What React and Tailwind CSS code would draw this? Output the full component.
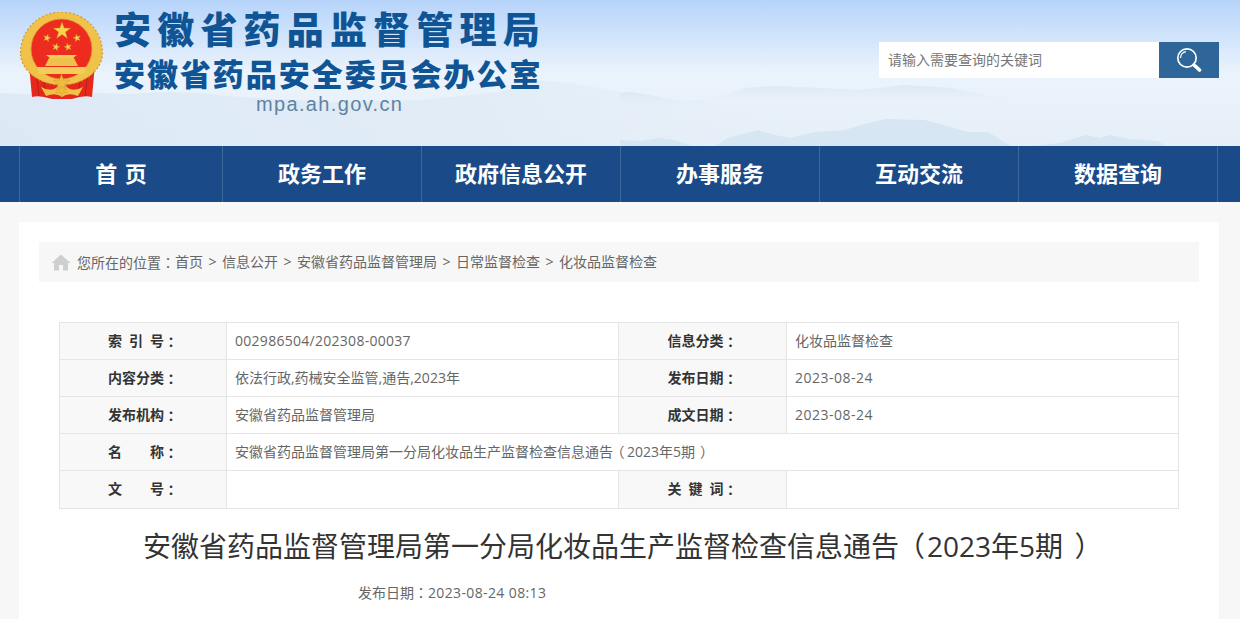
const navItems = ["首 页", "政务工作", "政府信息公开", "办事服务", "互动交流", "数据查询"];
const crumbs = ["首页", "信息公开", "安徽省药品监督管理局", "日常监督检查", "化妆品监督检查"];

// fullwidth punctuation sits centred in the reference, the TC cut does that
const P = ({ children }) => <span className="font-['Noto_Sans_CJK_TC',sans-serif]">{children}</span>;
const Open = () => <span className="inline-block w-[1em] pl-[0.28em] [font-feature-settings:'palt']">（</span>;
const Close = () => <span className="inline-block w-[1em] pl-[0.4em] [font-feature-settings:'palt']">）</span>;

const Star = ({ x, y, r, rot = 0, fill = "#f7d44c" }) => {
  const pts = [];
  for (let i = 0; i < 10; i++) {
    const rad = i % 2 ? r * 0.4 : r;
    const a = ((-90 + rot + i * 36) * Math.PI) / 180;
    pts.push(`${(x + rad * Math.cos(a)).toFixed(2)},${(y + rad * Math.sin(a)).toFixed(2)}`);
  }
  return <polygon points={pts.join(" ")} fill={fill} stroke="#c9962a" strokeWidth="0.4" />;
};

const Emblem = () => (
  <svg width="84" height="88" viewBox="0 0 84 88" className="mt-[1px] shrink-0">
    <path d="M9 52 L12 85 Q20 83 32 87 H52 Q64 83 72 85 L75 52 Z" fill="#e5281b" />
    <path d="M17 66 L19 84 M24 70 L26 85 M67 66 L65 84 M60 70 L58 85" stroke="#b81f14" strokeWidth="1" />
    <path d="M0.5 41 A41 41 0 0 1 82.5 41 C82.5 58 64 73 41.5 73 C19 73 0.5 58 0.5 41 Z" fill="#f0c24a" />
    <path d="M0.5 41 A41 41 0 0 1 82.5 41 C82.5 58 64 73 41.5 73 C19 73 0.5 58 0.5 41 Z" fill="none" stroke="#d39b2c" strokeWidth="1.2" strokeDasharray="2 2" />
    <ellipse cx="41.5" cy="37" rx="30.5" ry="30" fill="#ee2b1f" stroke="#d69a2b" strokeWidth="0.8" />
    <Star x={42} y={19} r={9} />
    <Star x={27} y={26} r={4} rot={15} />
    <Star x={57} y={26} r={4} rot={-15} />
    <Star x={36} y={35} r={4} rot={15} />
    <Star x={48} y={35} r={4} rot={-15} />
    <path d="M26 43 H57 L53 46 H30 Z" fill="#f4cd58" />
    <path d="M29 46 H54 L58 54 H25 Z" fill="#efc04a" />
    <path d="M17 55 H66 L64 62 H19 Z" fill="#f4cd58" />
    <path d="M21 75 Q30 80 36 76 L42 70 L48 76 Q54 80 63 75 L58 84 Q48 80 42 85 Q36 80 26 84 Z" fill="#f0c24a" />
    <Star x={41.5} y={71} r={9} fill="#efbb3f" />
    <Star x={41.5} y={79} r={6} rot={36} fill="#efbb3f" />
  </svg>
);

const Mountains = () => (
  <svg className="absolute inset-0" width="1240" height="146" viewBox="0 0 1240 146">
    <defs>
      <linearGradient id="haze" x1="0" y1="0" x2="1" y2="0">
        <stop offset="0" stopColor="#dbe8f5" />
        <stop offset="0.6" stopColor="#e0ebf6" />
        <stop offset="1" stopColor="#e6eff8" stopOpacity="0" />
      </linearGradient>
      <linearGradient id="far" x1="0" y1="0" x2="0" y2="1">
        <stop offset="0" stopColor="#dce8f4" />
        <stop offset="1" stopColor="#e9f1fa" stopOpacity="0" />
      </linearGradient>
    </defs>
    <path d="M0 93 L40 95 L95 93 L130 94 L166 92 L198 93 L240 97 L330 102 L420 100 L500 92 L537 80 L570 83 L620 92 L690 104 L800 120 V146 H0 Z" fill="url(#haze)" opacity="0.85" />
    <path d="M620 93 L632 92 L655 96 L680 101 L700 100 L715 104 L760 112 L620 112 Z" fill="url(#far)" />
    <path d="M700 104 L746 88 L775 86 L820 88 L860 90 L880 88 L905 85 L950 88 L975 93 L1030 106 Z" fill="url(#far)" />
    <path d="M620 140 L640 141 L660 138 L675 140 L692 146 H620 Z" fill="#d7e6f3" />
    <path d="M715 146 L728 138 L758 130 L775 135 L790 138 L815 132 L845 130 L865 124 L885 119 L925 120 L968 132 L988 132 L1011 146 Z" fill="#d7e6f3" />
    <path d="M1031 146 L1060 143 L1086 135 L1100 138 L1110 135 L1130 139 L1158 141 L1165 146 Z" fill="#d7e6f3" />
  </svg>
);

const Label = ({ chars }) => (
  <div className="flex justify-center font-bold text-[#333]">
    <span className="flex w-14 justify-between">
      {chars.map((c) => (
        <span key={c}>{c}</span>
      ))}
    </span>
    <P>：</P>
  </div>
);

const Row = ({ children, last }) => (
  <div className={`flex h-[37px] ${last ? "" : "border-b border-[#e5e5e5]"}`}>{children}</div>
);

const LabelCell = ({ chars, width }) => (
  <div className={`flex items-center justify-center bg-[#f8f8f8] border-r border-[#e5e5e5] pb-[1px] ${width}`}>
    <Label chars={chars} />
  </div>
);

const ValueCell = ({ children, width }) => (
  <div className={`flex items-center px-2 pb-[1px] text-[#666] ${width}`}>{children}</div>
);

export default function App() {
  return (
    <div className="h-[619px] w-[1240px] overflow-hidden bg-[#f7f7f7] font-['Open_Sans','Noto_Sans_CJK_SC',sans-serif] text-sm">
      <header className="relative h-[146px] bg-gradient-to-b from-[#b6d4fa] via-[#ebf3fc] via-50% to-[#e6eff8]">
        <Mountains />
        <div className="relative flex pl-[20px] pt-[11px]">
          <Emblem />
          <div className="ml-[10px] flex w-[428px] flex-col items-start">
            <div className="text-[37px] leading-[38px] font-black tracking-[6.2px] text-[#0f5596] whitespace-nowrap">
              安徽省药品监督管理局
            </div>
            <div className="mt-[7px] text-[31px] leading-[36px] font-black tracking-[1.95px] text-[#0f5596] whitespace-nowrap">
              安徽省药品安全委员会办公室
            </div>
            <div className="ml-[142px] mt-[1px] text-[20px] leading-[22px] tracking-[1.35px] text-[#5f83a3] font-['Liberation_Sans',sans-serif]">
              mpa.ah.gov.cn
            </div>
          </div>
          <div className="ml-[337px] mt-[31px] flex h-9">
            <div className="flex w-[280px] items-center bg-white pl-[9px] text-[#777]">请输入需要查询的关键词</div>
            <button className="flex w-[60px] items-center justify-center bg-[#2f6699]">
              <svg width="26" height="26" viewBox="0 0 26 26" fill="none">
                <circle cx="11" cy="11" r="9.2" stroke="white" strokeWidth="1.7" />
                <path d="M4.5 11 A6.5 6.5 0 0 1 10 4.6" stroke="white" strokeWidth="1.3" />
                <path d="M18 18 L23.5 23" stroke="white" strokeWidth="3.6" strokeLinecap="round" />
              </svg>
            </button>
          </div>
        </div>
      </header>

      <nav className="h-14 bg-[#1a4b88]">
        <div className="ml-[19px] flex h-14 w-[1199px] border-l border-[#3f6a9e]">
          {navItems.map((item, i) => (
            <div
              key={item}
              className={`flex items-center justify-center border-r border-[#3f6a9e] pb-[1px] text-[22px] font-bold text-white [word-spacing:2px] ${i === 0 ? "w-[203px]" : "w-[199px]"}`}
            >
              {item}
            </div>
          ))}
        </div>
      </nav>

      <main className="ml-[19px] mt-5 h-[400px] w-[1200px] bg-white px-5 pt-5">
        <div className="flex h-10 items-center bg-[#f7f7f7] pl-3 text-[#666]">
          <svg width="20" height="17" viewBox="0 0 20 17" className="mr-[6px]">
            <path d="M10 0.5 L0.5 9 H3 V16.5 H8 V11 H12 V16.5 H17 V9 H19.5 Z" fill="#cfcfcf" />
          </svg>
          <span>
            您所在的位置<P>：</P>
          </span>
          {crumbs.map((c, i) => (
            <span key={c} className="flex">
              {i > 0 && <span className="px-[5.5px]">&gt;</span>}
              {c}
            </span>
          ))}
        </div>

        <div className="mx-5 mt-10 border border-[#e5e5e5]">
          <Row>
            <LabelCell chars={["索", "引", "号"]} width="w-[167px]" />
            <ValueCell width="w-[391px]">
              <span className="tracking-[0.28px]">002986504/202308-00037</span>
            </ValueCell>
            <LabelCell chars={["信", "息", "分", "类"]} width="w-[169px] border-l" />
            <ValueCell>化妆品监督检查</ValueCell>
          </Row>
          <Row>
            <LabelCell chars={["内", "容", "分", "类"]} width="w-[167px]" />
            <ValueCell width="w-[391px]">依法行政,药械安全监管,通告,2023年</ValueCell>
            <LabelCell chars={["发", "布", "日", "期"]} width="w-[169px] border-l" />
            <ValueCell>
              <span className="tracking-[0.5px]">2023-08-24</span>
            </ValueCell>
          </Row>
          <Row>
            <LabelCell chars={["发", "布", "机", "构"]} width="w-[167px]" />
            <ValueCell width="w-[391px]">安徽省药品监督管理局</ValueCell>
            <LabelCell chars={["成", "文", "日", "期"]} width="w-[169px] border-l" />
            <ValueCell>
              <span className="tracking-[0.5px]">2023-08-24</span>
            </ValueCell>
          </Row>
          <Row>
            <LabelCell chars={["名", "称"]} width="w-[167px]" />
            <ValueCell>
              <span>
                安徽省药品监督管理局第一分局化妆品生产监督检查信息通告
                <Open />
                2023年5期
                <Close />
              </span>
            </ValueCell>
          </Row>
          <Row last>
            <LabelCell chars={["文", "号"]} width="w-[167px]" />
            <ValueCell width="w-[391px]" />
            <LabelCell chars={["关", "键", "词"]} width="w-[169px] border-l" />
            <ValueCell />
          </Row>
        </div>

        <h1 className="mt-[16px] pr-[4px] text-center text-[28px] leading-[42px] text-[#333]">
          安徽省药品监督管理局第一分局化妆品生产监督检查信息通告
          <Open />
          2023年5期
          <Close />
        </h1>
        <div className="mt-[15px] pl-[319px] text-[#666]">
          发布日期<P>：</P>
          <span className="tracking-[0.37px]">2023-08-24 08:13</span>
        </div>
      </main>
    </div>
  );
}
